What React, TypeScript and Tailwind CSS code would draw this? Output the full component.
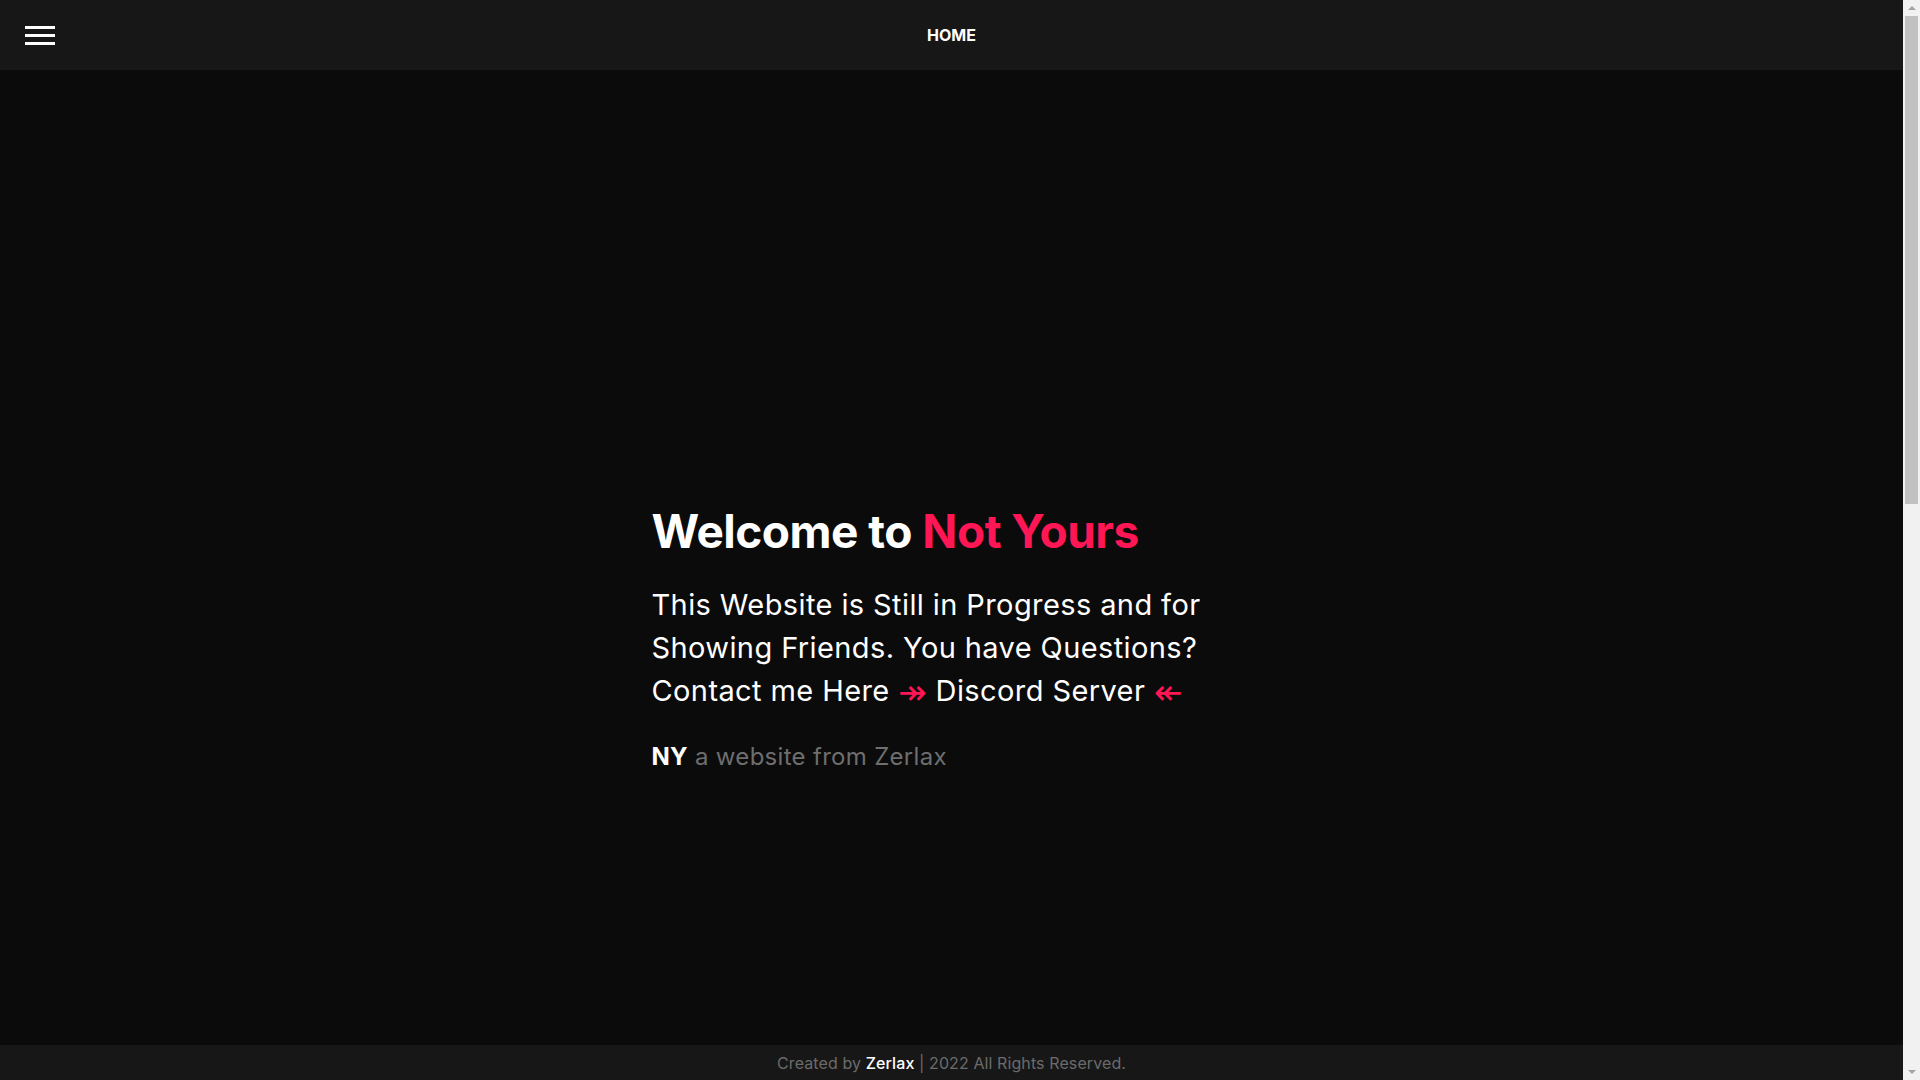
import React from "react";

function Scrollbar() {
  return (
    <div className="w-[17px] h-screen bg-[#f1f1f1] flex flex-col items-center shrink-0">
      <div className="h-[16px] w-full flex items-center justify-center">
        <svg width="8" height="5" viewBox="0 0 8 5">
          <polygon points="4,0 8,4 0,4" fill="#a3a3a3" />
        </svg>
      </div>
      <div className="w-[13px] h-[488px] bg-[#c1c1c1]" />
      <div className="flex-1" />
      <div className="h-[16px] w-full flex items-center justify-center">
        <svg width="8" height="5" viewBox="0 0 8 5">
          <polygon points="0,0 8,0 4,4" fill="#a3a3a3" />
        </svg>
      </div>
    </div>
  );
}

export default function App() {
  const font = { fontFamily: "Inter, 'Open Sans', sans-serif" };
  const arrowFont = { fontFamily: "'Liberation Sans', 'DejaVu Sans', sans-serif" };
  return (
    <div className="h-screen flex bg-[#0b0b0b] text-white overflow-hidden" style={font}>
      <div className="flex-1 flex flex-col min-w-0">
        <header className="h-[70px] bg-[#171717] grid grid-cols-[1fr_auto_1fr] items-center shrink-0">
          <button className="ml-[25px] flex flex-col gap-[5px] justify-self-start" aria-label="menu">
            <span className="block w-[30px] h-[3px] bg-white" />
            <span className="block w-[30px] h-[3px] bg-white" />
            <span className="block w-[30px] h-[3px] bg-white" />
          </button>
          <nav className="flex items-center">
            <span className="text-[16px] font-bold tracking-[0px]">HOME</span>
          </nav>
          <div />
        </header>
        <main className="flex-1 pt-[425px]">
          <div className="w-[600px] mx-auto">
            <h1 className="text-[46px] leading-[72px] font-bold tracking-[-0.5px]">
              Welcome to <span className="text-[#ff1654]">Not Yours</span>
            </h1>
            <p className="mt-[16px] text-[29px] leading-[43px] font-normal tracking-[0.4px]">
              This Website is Still in Progress and for Showing Friends. You have Questions? Contact me Here{" "}
              <span className="relative top-[3px] text-[#ff1654] text-[34px] leading-[0]" style={arrowFont}>↠</span> Discord Server{" "}
              <span className="relative top-[3px] text-[#ff1654] text-[34px] leading-[0]" style={arrowFont}>↞</span>
            </p>
            <p className="mt-[27px] text-[24px] leading-[36px] tracking-[0.3px]">
              <span className="font-bold text-white">NY</span>{" "}
              <span className="text-[#6e6e6e]">a website from Zerlax</span>
            </p>
          </div>
        </main>
        <footer className="h-[35px] bg-[#171717] flex items-center justify-center text-[16px] text-[#6b6b6b] shrink-0 tracking-[0.1px]">
          <span>
            Created by <span className="text-white font-medium">Zerlax</span> | 2022 All Rights Reserved.
          </span>
        </footer>
      </div>
      <Scrollbar />
    </div>
  );
}
